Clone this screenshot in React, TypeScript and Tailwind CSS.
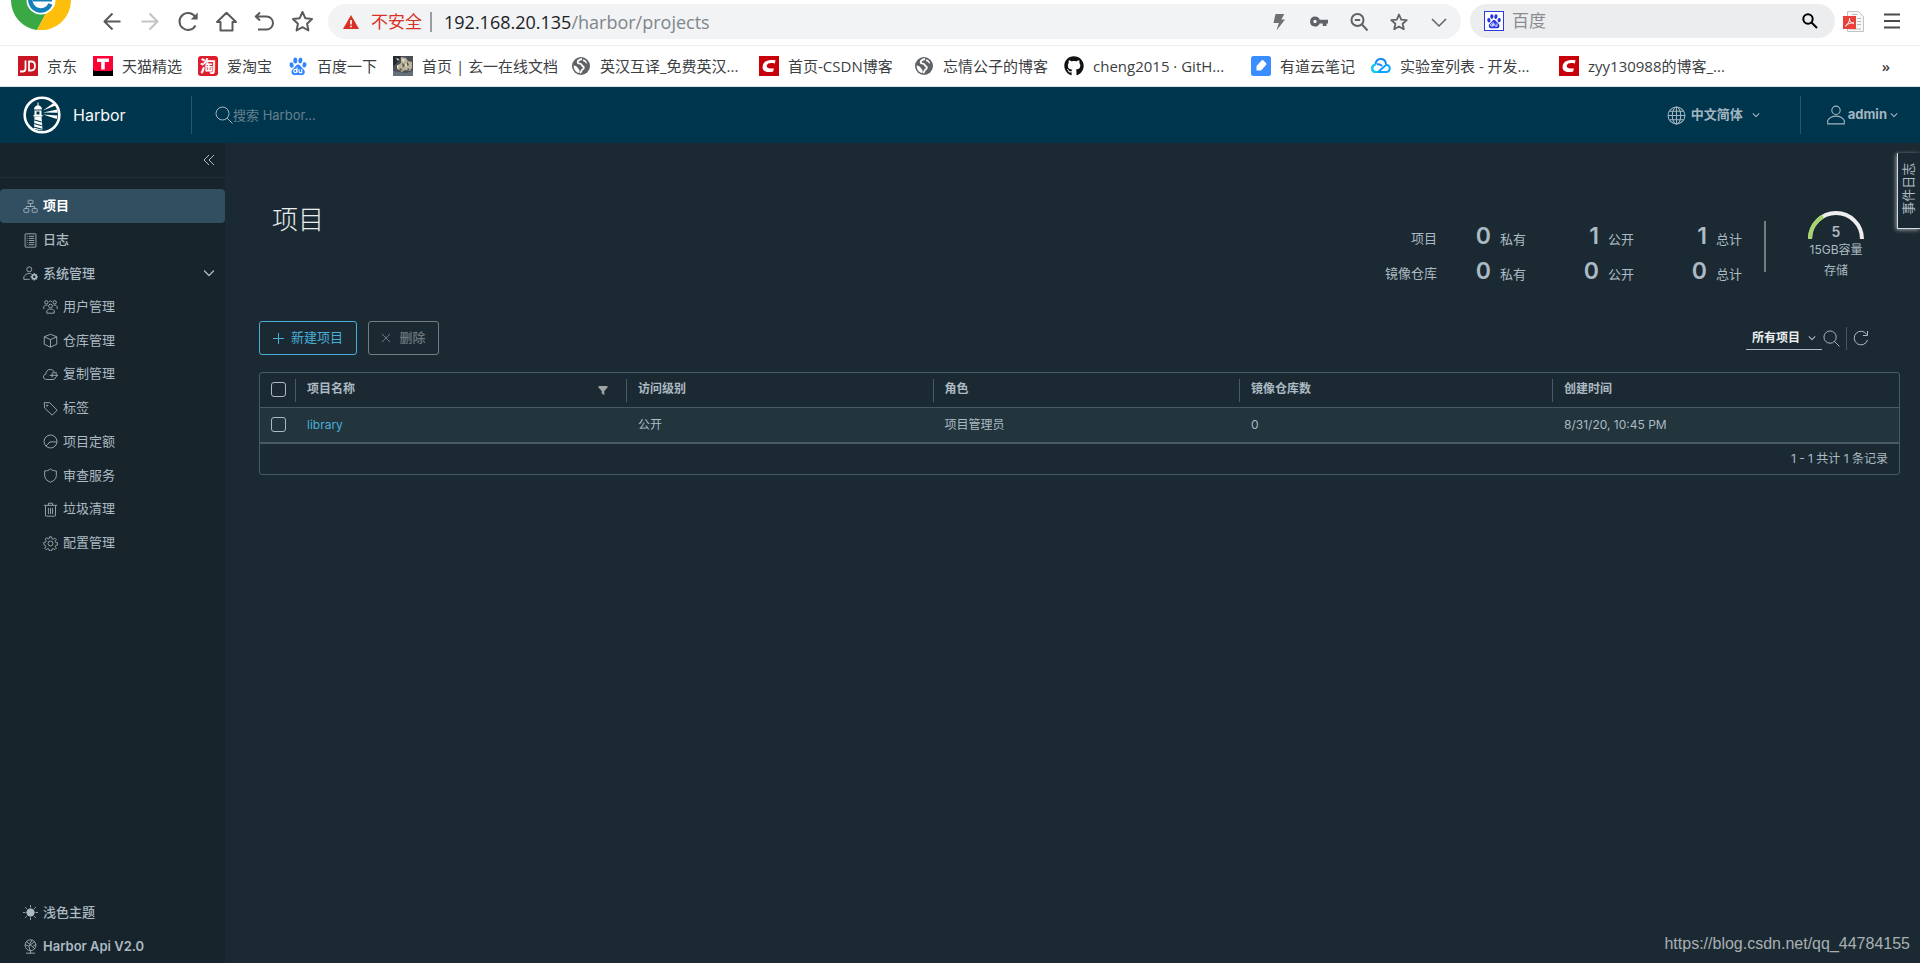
import React from 'react';
import { FaGithub } from 'react-icons/fa';

type SvgProps = { className?: string; children?: React.ReactNode; box?: string; width?: number };

function Line({ className = '', children, box = '0 0 36 36', width = 2 }: SvgProps) {
  return (
    <svg
      aria-hidden="true"
      className={`shrink-0 ${className}`}
      viewBox={box}
      fill="none"
      stroke="currentColor"
      strokeWidth={width}
      strokeLinejoin="round"
    >
      {children}
    </svg>
  );
}

/* ---------- browser chrome ---------- */

function BrowserLogo() {
  return (
    <svg aria-hidden="true" className="h-[30px] w-[60px] shrink-0 self-start" viewBox="0 0 60 30">
      <path d="M0 0 A30 30 0 0 0 26 30 L42 0 Z" fill="#3aa845" />
      <path d="M26 30 A30 30 0 0 0 60 0 L34 0 L44 4 L35 13 Z" fill="#fdbf0b" />
      <circle cx="30" cy="0" r="14.500" fill="#fff" />
      <path d="M19.500 -2a10.500 10.500 0 0 0 20 6" fill="none" stroke="#1380b8" strokeWidth="4.500" />
      <path d="M22 0h19" stroke="#1380b8" strokeWidth="3" />
    </svg>
  );
}

const navIcons: { label: string; tone: string; art: React.ReactNode }[] = [
  { label: '后退', tone: 'text-[#5a5a5a]', art: <path d="M18.500 10.500H2.500M10.500 2.500l-8 8 8 8" /> },
  { label: '前进', tone: 'text-[#c4c4c4]', art: <path d="M1.500 10.500h16M9.500 2.500l8 8-8 8" /> },
  {
    label: '刷新',
    tone: 'text-[#5a5a5a]',
    art: (
      <>
        <path d="M17.500 14.500a8.500 8.500 0 1 1 .3-7.500" />
        <path d="M19.700 1.500v7h-7z" fill="currentColor" stroke="none" />
      </>
    ),
  },
  { label: '主页', tone: 'text-[#5a5a5a]', art: <path d="M1 11L10.500 1.800 20 11h-3.500v8.500h-12V11z" /> },
  { label: '撤销', tone: 'text-[#5a5a5a]', art: <path d="M6 1.500L1.800 5.500 6 9.500M2 5.500h10.500a6.500 6.500 0 0 1 0 13H4" /> },
  {
    label: '收藏',
    tone: 'text-[#5a5a5a]',
    art: <path d="M10.500 1l2.900 6.300 6.600.8-4.900 4.600 1.300 6.800-5.900-3.300-5.900 3.300 1.300-6.800L1 8.100l6.600-.8z" />,
  },
];

function Paw({ className = '' }: { className?: string }) {
  return (
    <svg aria-hidden="true" className={`shrink-0 ${className}`} viewBox="0 0 20 20" fill="currentColor">
      <ellipse cx="3.600" cy="9" rx="2" ry="2.800" transform="rotate(-12 3.600 9)" />
      <ellipse cx="7.300" cy="4.500" rx="2" ry="2.900" />
      <ellipse cx="12.400" cy="4.500" rx="2" ry="2.900" transform="rotate(8 12.400 4.500)" />
      <ellipse cx="16.500" cy="8.800" rx="2" ry="2.700" transform="rotate(8 16.500 8.800)" />
      <path d="M10 8.600c2 0 2.700 1.900 4.100 3.300 1.700 1.500 3.200 2.600 2.600 4.900-.6 2.300-2.600 2.500-4 2.300-1.300-.2-3.700-.2-5 0-1.700.3-3.900-.1-4.200-2.500-.3-2 .9-3.100 2.500-4.500C7.400 10.900 8 8.600 10 8.600z" />
      <g fill="none" stroke="#fff" strokeWidth="1.100">
        <circle cx="7.300" cy="15" r="1.600" />
        <path d="M9 11.500v5.200M11 13.200v2.200q0 1.200 1.200 1.200h1.500v-3.600" />
      </g>
    </svg>
  );
}

function Earth() {
  return (
    <svg aria-hidden="true" className="size-5 shrink-0" viewBox="0 0 20 20">
      <circle cx="10" cy="10" r="9" fill="#5f6368" />
      <path
        d="M11 3c-2.500.5-4.500 2-4.300 3.600.3 1.300 2 .9 3.200 1.400 1.500.6.600 2 2.100 2.400 1.200.3 1 2 0 2.600-1.400.8-1.500 2.600-2.800 4.200"
        fill="none"
        stroke="#fff"
        strokeWidth="1.800"
      />
      <path d="M2.700 9.500c1.800.2 3.500.9 4 2.300.5 1.500 1.900 1.200 2 3.200l-.5 2C5 16.500 2.500 13.500 2.700 9.500z" fill="#fff" />
      <path d="M12.500 3.200c-1 1-.5 2.400 1 2.500 1 0 .8 1.700 2.600 2C16 5.800 14.500 4 12.500 3.200z" fill="#fff" />
    </svg>
  );
}

function CsdnIcon() {
  return (
    <svg aria-hidden="true" className="size-5 shrink-0" viewBox="0 0 20 20">
      <path d="M0 0h20v20H0z" fill="#c7000b" />
      <path d="M16.500 4.300l-.7 3.200c-4-.8-7.500-.6-8 2.300-.4 2.700 3 3.200 7 2.400l-.6 3.200c-6 1.400-11 .2-10.600-4.700C4 5 9.500 3.200 16.500 4.300z" fill="#fff" />
    </svg>
  );
}

const bookmarks: { text: string; size: string; icon: React.ReactNode }[] = [
  {
    text: '京东',
    size: 'w-[30px]',
    icon: (
      <svg aria-hidden="true" className="size-5 shrink-0" viewBox="0 0 20 20">
        <path d="M0 0h20v20H0z" fill="#c81623" />
        <path d="M7.500 4.500v8q0 3-3 3H2M11 5.500v9h2.300q3.700 0 3.700-4.500t-3.700-4.500z" fill="none" stroke="#fff" strokeWidth="1.800" />
      </svg>
    ),
  },
  {
    text: '天猫精选',
    size: 'w-[60px]',
    icon: (
      <svg aria-hidden="true" className="size-5 shrink-0" viewBox="0 0 20 20">
        <path d="M0 0h20v20H0z" fill="#ff0036" />
        <path d="M0 13.500q1 1.500 3 1.500h14q2 0 3-1.500V20H0z" fill="#000" />
        <path d="M4 2.500h12V6h-4.200v7.500H8.200V6H4z" fill="#fff" />
      </svg>
    ),
  },
  {
    text: '爱淘宝',
    size: 'w-[45px]',
    icon: (
      <span aria-hidden="true" className="flex size-5 shrink-0 items-center justify-center rounded-[3px] bg-[#dd1c2c] text-[16px] leading-5 font-bold text-white">
        淘
      </span>
    ),
  },
  { text: '百度一下', size: 'w-[60px]', icon: <Paw className="size-5 text-[#3385ff]" /> },
  {
    text: '首页 | 玄一在线文档',
    size: 'w-[133px]',
    icon: (
      <svg aria-hidden="true" className="size-5 shrink-0" viewBox="0 0 20 20">
        <path d="M0 0h20v20H0z" fill="#4a4f55" />
        <path d="M0 0h8l-3 6-5 4z" fill="#26292e" />
        <path d="M8 1l5 1 2 3 4 1v6l-2 3-5-1-3 2-5-3 1-4 3-2z" fill="#b9b29c" />
        <path d="M3 2l3 1-1 2zM9 3l3 1-2 2zM4 9l2 1-2 3zM12 8l3 1-2 2z" fill="#efe8d4" />
        <path d="M9 7l3 2-2 3zM14 5l2 4-2 1zM7 12l3 2-4 1zM15 12l2 2-3 1z" fill="#5f5a4c" />
        <path d="M0 15l6 1 7 1 7-2v5H0z" fill="#63707c" />
      </svg>
    ),
  },
  { text: '英汉互译_免费英汉...', size: 'w-[143px]', icon: <Earth /> },
  { text: '首页-CSDN博客', size: 'w-[110px]', icon: <CsdnIcon /> },
  { text: '忘情公子的博客', size: 'w-[105px]', icon: <Earth /> },
  { text: 'cheng2015 · GitH...', size: 'w-[142px]', icon: <FaGithub aria-hidden="true" className="size-5 shrink-0 text-[#111]" /> },
  {
    text: '有道云笔记',
    size: 'w-[75px]',
    icon: (
      <svg aria-hidden="true" className="size-5 shrink-0" viewBox="0 0 20 20">
        <rect width="20" height="20" rx="2.500" fill="#398dff" />
        <path d="M5.500 14.500V10l5-5.500q1-1 2 0l2.500 2.500q1 1 0 2l-5 5.500z" fill="#fff" />
      </svg>
    ),
  },
  {
    text: '实验室列表 - 开发...',
    size: 'w-[143px]',
    icon: (
      <svg aria-hidden="true" className="size-5 shrink-0" viewBox="0 0 20 20" fill="none" strokeWidth="2">
        <path d="M4.500 8.500C5 1.500 14 1 15 8" stroke="#1687f5" />
        <path d="M4.500 8.500c-4.500 1-4.500 7.500.5 7.500h2l8-7c5-.5 5 7 0 7H7" stroke="#08a4ff" />
        <path d="M4.500 8.500c-4.500 1-4.500 7.500.5 7.500h1.500" stroke="#12cdf0" />
        <path d="M6 8.500c2-.5 3.500 0 5 1.500" stroke="#1687f5" />
      </svg>
    ),
  },
  { text: 'zyy130988的博客_...', size: 'w-[143px]', icon: <CsdnIcon /> },
];

function Browser() {
  return (
    <div className="bg-white font-['Open_Sans','Noto_Sans_CJK_SC',sans-serif]">
      <div className="flex h-[46px] items-start border-b border-[#ededed] pr-5 pl-[11px]">
        <BrowserLogo />
        <div className="ml-[31px] flex h-[42px] items-center gap-[17px]">
          {navIcons.map((n) => (
            <button key={n.label} type="button" aria-label={n.label} className={n.tone}>
              <Line box="0 0 21 21" className="size-[21px]">
                {n.art}
              </Line>
            </button>
          ))}
        </div>
        <div className="mt-1 ml-[15px] flex h-[35px] min-w-0 flex-1 items-center rounded-full bg-[#f1f3f4] pr-3 pl-[15px] text-[17px] leading-6 whitespace-nowrap">
          <svg aria-hidden="true" className="size-4 shrink-0" viewBox="0 0 16 16">
            <path d="M8 1l8 14H0z" fill="#d93025" />
            <path d="M7.200 6h1.600v4.500H7.200zM7.200 11.700h1.600v1.600H7.200z" fill="#fff" />
          </svg>
          <span className="ml-3 text-[#d93025]">不安全</span>
          <span className="mx-2 h-5 w-[2px] bg-[#9a9da1]" />
          <span className="ml-1 text-[18px] text-[#202124]">
            192.168.20.135<span className="text-[#80868b]">/harbor/projects</span>
          </span>
          <div className="ml-auto flex items-center gap-5 text-[#5f6368]">
            <button type="button" aria-label="极速模式">
              <svg aria-hidden="true" className="size-5" viewBox="0 0 20 20" fill="#707070">
                <path d="M6.500 2h8.800l-3 5.500h3.700L7.500 18.500 9.800 11H4.500z" />
              </svg>
            </button>
            <button type="button" aria-label="密码">
              <svg aria-hidden="true" className="size-5" viewBox="0 0 20 20" fill="currentColor">
                <path
                  fillRule="evenodd"
                  d="M6 4.500a5 5 0 0 1 4.700 3.300H19v3.700h-1.500V14h-3.700v-2.500h-3.100A5 5 0 1 1 6 4.500zm0 3.300a1.700 1.700 0 1 0 0 3.400 1.700 1.700 0 0 0 0-3.400z"
                />
              </svg>
            </button>
            <button type="button" aria-label="缩小">
              <Line box="0 0 20 20" className="size-5">
                <circle cx="8.500" cy="8" r="6" />
                <path d="M13 12.500l5.500 6M5.800 8h5.400" />
              </Line>
            </button>
            <button type="button" aria-label="加入收藏">
              <Line box="0 0 20 20" className="size-5" width={1.800}>
                <path d="M10 2.500l2.200 5.100 5.600.5-4.200 3.700 1.200 5.500-4.800-2.900-4.800 2.900 1.200-5.500-4.200-3.700 5.600-.5z" />
              </Line>
            </button>
            <button type="button" aria-label="更多">
              <Line box="0 0 20 20" className="size-5" width={1.500}>
                <path d="M3 7l7 7 7-7" />
              </Line>
            </button>
          </div>
        </div>
        <div className="mt-1 ml-[9px] flex h-[34px] w-[365px] items-center rounded-full bg-[#ecedef] pr-[17px] pl-[14px]">
          <span className="flex size-5 items-center justify-center border border-[#2a3be0] bg-white">
            <Paw className="size-4 text-[#2334e0]" />
          </span>
          <input
            aria-label="百度搜索"
            placeholder="百度"
            className="ml-2 h-6 min-w-0 flex-1 bg-transparent text-[17px] leading-6 outline-none placeholder:text-[#8a8c90]"
          />
          <button type="button" aria-label="搜索" className="text-black">
            <Line box="0 0 16 16" className="size-4">
              <circle cx="6" cy="6" r="4.700" />
              <path d="M9.500 9.500l5.500 5.500" />
            </Line>
          </button>
        </div>
        <button type="button" aria-label="PDF" className="mt-[11px] ml-2 h-[21px] w-[21px]">
          <svg aria-hidden="true" viewBox="0 0 21 21">
            <path d="M4.500.500h11l5 5v15h-16z" fill="#f7f7f7" stroke="#c4c4c4" />
            <path d="M9 3.500h5M14 7.500h4M14 10.500h4M14 13.500h4M6 18h12" stroke="#bbb" />
            <path d="M0 5h13v13H0z" fill="#e9403c" />
            <path d="M2.500 15c2-1 4.500-5 4-7.500 0 3 2 5 4.500 4.500-3-.5-6 .5-8.500 3z" fill="none" stroke="#fff" />
          </svg>
        </button>
        <button type="button" aria-label="菜单" className="mt-[13px] ml-5 text-[#4a4a4a]">
          <Line box="0 0 16 16" className="size-4">
            <path d="M0 1.500h16M0 8h16M0 14.500h16" />
          </Line>
        </button>
      </div>
      <nav aria-label="书签" className="flex h-[41px] items-center gap-4 border-b border-[#dcdcdc] pr-[26px] pl-[18px] text-[15px] leading-5 text-[#3c4043]">
        {bookmarks.map((b) => (
          <a key={b.text} href="#bookmark" className="flex items-center gap-[9px] whitespace-nowrap">
            {b.icon}
            <span className={b.size}>{b.text}</span>
          </a>
        ))}
        <button type="button" aria-label="更多书签" className="ml-auto w-4 font-semibold">
          »
        </button>
      </nav>
    </div>
  );
}

/* ---------- Harbor header ---------- */

function HarborLogo() {
  return (
    <svg aria-hidden="true" className="size-[38px] shrink-0" viewBox="0 0 38 38">
      <circle cx="19" cy="19" r="17.300" fill="none" stroke="#fff" strokeWidth="2.600" />
      <path d="M11 13.500q0-3.500 4-4.500 4 1 4 4.500zM11.500 14.500h7v5h-7z" fill="#fff" />
      <path d="M13.500 15.500h3v3h-3z" fill="#00364d" />
      <path d="M14.500 6.500h1V9h-1zM10.500 19h9v1.500h-9z" fill="#fff" />
      <path d="M11.500 20.500h7l1 14-8.500-1.500z" fill="#fff" />
      <path d="M11.500 24l7 2M11.200 27.500l7.500 2.200M11 31l8 2.200" stroke="#00364d" strokeWidth="1.100" />
      <path d="M20 14.500L30.500 7l2 2.500zM20 16.500l14-3 .6 3.200zM20 18.500l14.500 1-.7 3.500z" fill="#fff" />
    </svg>
  );
}

function Caret({ className = '' }: { className?: string }) {
  return (
    <Line box="0 0 10 10" className={`size-2 ${className}`} width={1.300}>
      <path d="M1 3l4 4 4-4" />
    </Line>
  );
}

function SearchIcon({ className }: { className: string }) {
  return (
    <Line className={className}>
      <circle cx="15" cy="15" r="13" />
      <path d="M24 24l11 11" />
    </Line>
  );
}

function Header() {
  return (
    <header className="flex h-14 items-center bg-[#00364d] text-[#a3b5c0]">
      <a href="#home" className="flex h-[38px] w-48 items-center gap-3 border-r border-[#2a566a] pl-[23px] text-[16px] text-[#fafafa]">
        <HarborLogo />
        Harbor
      </a>
      <label className="flex flex-1 items-center pl-[23px]">
        <SearchIcon className="size-[18px]" />
        <input
          aria-label="搜索"
          placeholder="搜索 Harbor..."
          className="h-6 w-64 bg-transparent text-[13px] outline-none placeholder:text-[#64818f]"
        />
      </label>
      <button type="button" className="flex items-center text-[13px] font-bold">
        <Line className="mr-[5px] size-[19px]">
          <circle cx="18" cy="18" r="16" />
          <ellipse cx="18" cy="18" rx="8" ry="16" />
          <path d="M18 2v32M2 18h32M5 10h26M5 26h26" />
        </Line>
        中文简体
        <Caret className="ml-[9px]" />
      </button>
      <button type="button" className="ml-10 flex h-[38px] items-center border-l border-[#2a566a] pr-[22px] pl-[25px] text-[13px] font-bold">
        <Line className="mr-[2px] size-5">
          <circle cx="18" cy="9.500" r="7.500" />
          <path d="M3 34v-6c3-5 8.500-8 15-8s12 3 15 8v6z" />
        </Line>
        admin
        <Caret className="ml-[3px]" />
      </button>
    </header>
  );
}

/* ---------- sidebar ---------- */

const art = {
  projects: (
    <>
      <rect x="12" y="3" width="12" height="8" rx="2" />
      <rect x="2" y="23" width="12" height="9" rx="2" />
      <rect x="22" y="23" width="12" height="9" rx="2" />
      <path d="M18 11v7M8 23v-5h20v5" />
    </>
  ),
  logs: (
    <>
      <rect x="5" y="2" width="26" height="32" rx="1" />
      <path d="M9 8h2M9 13h2M9 18h2M9 23h2M9 28h2M14 8h13M14 13h13M14 18h13M14 23h13M14 28h13" />
    </>
  ),
  admin: (
    <>
      <circle cx="15" cy="8" r="6" />
      <path d="M16 32H2v-6c3-5 7-8 13-8 2 0 4 0 5 1" />
      <circle cx="27" cy="26" r="5" strokeWidth="4" />
      <path d="M27 17v4M27 31v4M18 26h4M32 26h4M21 20l3 3M30 29l3 3M33 20l-3 3M24 29l-3 3" strokeWidth="3" />
    </>
  ),
  users: (
    <>
      <circle cx="18" cy="17" r="4.500" />
      <circle cx="8" cy="8" r="4" />
      <circle cx="28" cy="8" r="4" />
      <path d="M9 34v-6c4-5 14-5 18 0v6zM2 24v-6c2-3 6-4 9-3M34 24v-6c-2-3-6-4-9-3M15 7c1-3 5-3 6 0" />
    </>
  ),
  registry: <path d="M18 3l15 6v18l-15 7-15-7V9zM3 9l15 7 15-7M18 16v18" />,
  replication: (
    <>
      <path d="M30 24c0 4-3 6-6 6H8c-4 0-7-3-7-6s2-6 6-7c0-6 4-11 10-11 5 0 8 2 10 6" />
      <path d="M16 20h19M31 16l4 4-4 4M22 14h12M22 15v10" />
    </>
  ),
  tag: (
    <>
      <path d="M3 4h13l18 18-12 12L4 17z" />
      <circle cx="10" cy="11" r="1.500" />
    </>
  ),
  quota: (
    <>
      <circle cx="18" cy="18" r="15.500" />
      <path d="M7 29l10-10h16M17 19l-3 2" />
    </>
  ),
  shield: <path d="M18 2c4 4 9 5 14 5v11c0 8-6 13-14 16C10 31 4 26 4 18V7c5 0 10-1 14-5z" />,
  trash: <path d="M6 9v24q0 1 2 1h20q2 0 2-1V9M2 8h32M13 8V3h10v5M13 14v15M18 14v15M23 14v15" />,
  gear: (
    <>
      <circle cx="18" cy="18" r="6" />
      <path d="M15.500 2h5l1 4.500 3 1.200 4-2.500 3.300 3.300-2.500 4 1.200 3 4.500 1v5l-4.500 1-1.200 3 2.500 4-3.300 3.300-4-2.500-3 1.200-1 4.500h-5l-1-4.500-3-1.200-4 2.500-3.300-3.300 2.500-4-1.200-3L2 20.500v-5l4.500-1 1.200-3-2.500-4 3.300-3.300 4 2.500 3-1.200z" />
    </>
  ),
  sun: (
    <>
      <circle cx="18" cy="18" r="9" fill="currentColor" />
      <path d="M18 0v6M18 30v6M0 18h6M30 18h6M5 5l4 4M27 27l4 4M31 5l-4 4M9 27l-4 4" />
    </>
  ),
  api: (
    <>
      <circle cx="18" cy="15" r="13" />
      <path d="M8 6l20 17M28 6L14 17l3 11M5 14l9 3M16 12l6-10M7 34h22M18 28v6M23 18l8-5" />
    </>
  ),
};

const topItems = [
  { text: '项目', icon: art.projects, active: true },
  { text: '日志', icon: art.logs, active: false },
];

const subItems = [
  { text: '用户管理', icon: art.users },
  { text: '仓库管理', icon: art.registry },
  { text: '复制管理', icon: art.replication },
  { text: '标签', icon: art.tag },
  { text: '项目定额', icon: art.quota },
  { text: '审查服务', icon: art.shield },
  { text: '垃圾清理', icon: art.trash },
  { text: '配置管理', icon: art.gear },
];

function Sidebar() {
  return (
    <aside className="flex w-[225px] shrink-0 flex-col bg-[#17242b] text-[13px] leading-5 text-[#acbac3]">
      <div className="flex h-[35px] items-center justify-end border-b border-[#1f2e36] pr-[10px]">
        <button type="button" aria-label="收起">
          <Line box="0 0 12 12" className="size-3" width={1}>
            <path d="M6 1L1 6l5 5M11 1L6 6l5 5" />
          </Line>
        </button>
      </div>
      <nav className="mt-[11px] flex flex-col">
        {topItems.map((t) => (
          <a
            key={t.text}
            href="#nav"
            className={`flex h-[34px] items-center gap-[5px] pb-[2px] pl-[23px] ${t.active ? 'rounded-[4px] bg-[#324f62] font-bold text-white' : 'font-medium'}`}
          >
            <Line className="mt-[2px] size-[15px] text-[#acbac3]">{t.icon}</Line>
            {t.text}
          </a>
        ))}
        <button type="button" aria-expanded="true" className="flex h-[33px] items-center gap-[5px] pr-[11px] pb-[2px] pl-[23px] text-left font-medium">
          <Line className="mt-[2px] size-[15px]">{art.admin}</Line>
          <span className="flex-1">系统管理</span>
          <Line box="0 0 10 10" className="size-[10px]" width={1.300}>
            <path d="M0 2.500l5 5 5-5" />
          </Line>
        </button>
        <div className="flex h-[270px] flex-col">
          {subItems.map((s) => (
            <a key={s.text} href="#nav" className="flex flex-1 items-center gap-[5px] pb-[2px] pl-[43px]">
              <Line className="mt-[2px] size-[15px]">{s.icon}</Line>
              {s.text}
            </a>
          ))}
        </div>
      </nav>
      <div className="mt-auto flex flex-col">
        <button type="button" className="flex h-[34px] items-center gap-[5px] pl-[23px] font-medium">
          <Line className="size-[15px]">{art.sun}</Line>
          浅色主题
        </button>
        <a href="#api" className="flex h-[34px] items-center gap-[5px] pl-[23px] font-semibold">
          <Line className="size-[15px]">{art.api}</Line>
          Harbor Api V2.0
        </a>
      </div>
    </aside>
  );
}

/* ---------- main ---------- */

const stats = [
  { name: '项目', values: [0, 1, 1] },
  { name: '镜像仓库', values: [0, 0, 0] },
];
const statLabels = ['私有', '公开', '总计'];

function Summary() {
  return (
    <section className="flex h-[122px] items-start justify-between pr-6 pl-[13px]">
      <h1 className="text-[26px] leading-[42px] font-light text-[#eaedf0]">项目</h1>
      <div className="flex pt-[12px]">
        <div className="grid auto-rows-[35px] grid-cols-[auto_89px_108px_108px] pt-[9px] text-[13px]">
          {stats.map((s) => (
            <React.Fragment key={s.name}>
              <span className="text-right leading-9">{s.name}</span>
              {s.values.map((v, i) => (
                <span key={statLabels[i]} className="flex items-baseline justify-end gap-[9px]">
                  <b className="text-[23px] leading-8 font-semibold">{v}</b>
                  {statLabels[i]}
                </span>
              ))}
            </React.Fragment>
          ))}
        </div>
        <div className="mt-[10px] ml-[22px] h-[51px] w-[2px] bg-[#737b81]" />
        <div className="ml-[30px] flex w-20 flex-col items-center">
          <div className="grid">
            <svg aria-hidden="true" className="col-start-1 row-start-1 h-7 w-14" viewBox="0 0 56 28" fill="none" strokeWidth="4">
              <path d="M2 28a26 26 0 0 1 52 0" stroke="#eee" />
              <path d="M2 28a26 26 0 0 1 13-22.500" stroke="#a6d46b" />
            </svg>
            <b className="col-start-1 row-start-1 self-end text-center text-[14px] leading-[14px] font-semibold">5</b>
          </div>
          <span className="text-[12px] leading-[22px]">15GB容量</span>
          <span className="text-[12px] leading-5">存储</span>
        </div>
      </div>
    </section>
  );
}

function Toolbar() {
  return (
    <div className="flex h-[34px] items-center pr-[31px]">
      <button type="button" className="flex h-[34px] w-[98px] items-center justify-center gap-[7px] rounded-[3px] border border-[#49afd9] text-[13px] text-[#49afd9]">
        <Line box="0 0 11 11" className="size-[11px]" width={1}>
          <path d="M5.500 0v11M0 5.500h11" />
        </Line>
        新建项目
      </button>
      <button type="button" disabled className="ml-[11px] flex h-[34px] w-[71px] items-center justify-center gap-2 rounded-[3px] border border-[#747d82] text-[13px] font-medium text-[#6f797f]">
        <Line box="0 0 10 10" className="size-[10px]" width={1}>
          <path d="M1 1l8 8M9 1L1 9" />
        </Line>
        删除
      </button>
      <div className="ml-auto grid w-[76px] items-center border-b border-[#acbac3]">
        <select
          aria-label="项目筛选"
          className="col-start-1 row-start-1 h-[22px] w-full appearance-none bg-transparent pl-[6px] text-[12px] leading-5 font-bold text-[#eaedf0] outline-none"
        >
          <option>所有项目</option>
        </select>
        <Caret className="pointer-events-none col-start-1 row-start-1 mr-[6px] justify-self-end" />
      </div>
      <button type="button" aria-label="搜索" className="ml-[1px]">
        <SearchIcon className="size-[17px]" />
      </button>
      <span className="mx-[6px] h-[23px] w-px bg-[#49555f]" />
      <button type="button" aria-label="刷新">
        <Line box="0 0 16 16" className="size-4" width={1}>
          <path d="M14.500 10A6.800 6.800 0 1 1 13.800 4.500M14.500 1v4.500H10" />
        </Line>
      </button>
    </div>
  );
}

const columns = [
  { text: '项目名称', size: 'w-[20.2%]' },
  { text: '访问级别', size: 'w-[18.7%]' },
  { text: '角色', size: 'w-[18.7%]' },
  { text: '镜像仓库数', size: 'w-[19.1%]' },
  { text: '创建时间', size: '' },
];

const box = 'block size-[15px] appearance-none rounded-[3px] border border-[#acbac3]';

function ProjectTable() {
  return (
    <div className="mt-[17px] overflow-hidden rounded-[3px] border border-[#495a67] text-[12px] leading-5">
      <table className="w-full table-fixed border-separate border-spacing-0 text-left">
        <thead>
          <tr>
            <th className="h-[35px] w-[35px] border-b border-[#495a67] p-0 pb-px pl-[11px]">
              <input type="checkbox" aria-label="全选" className={box} />
            </th>
            {columns.map((c, i) => (
              <th key={c.text} className={`border-b border-[#495a67] p-0 ${c.size}`}>
                <div className="flex h-[23px] items-center border-l border-[#495a67] pb-[2px] pl-[11px] font-bold">
                  {c.text}
                  {i === 0 && (
                    <button type="button" aria-label="筛选" className="mt-[2px] mr-[18px] ml-auto">
                      <svg aria-hidden="true" className="size-[10px]" viewBox="0 0 10 10" fill="#a0a3a5">
                        <path d="M.500 1h9v1.500L6.300 6v4L3.700 8.500V6L.500 2.500z" />
                      </svg>
                    </button>
                  )}
                </div>
              </th>
            ))}
          </tr>
        </thead>
        <tbody>
          <tr className="bg-[#22343c]">
            <td className="h-9 border-b-2 border-[#495a67] p-0 pb-px pl-[11px]">
              <input type="checkbox" aria-label="选择 library" className={box} />
            </td>
            <td className="border-b-2 border-[#495a67] p-0 pl-3">
              <a href="#library" className="text-[#49afd9]">
                library
              </a>
            </td>
            <td className="border-b-2 border-[#495a67] p-0 pl-3">公开</td>
            <td className="border-b-2 border-[#495a67] p-0 pl-3">项目管理员</td>
            <td className="border-b-2 border-[#495a67] p-0 pl-3">0</td>
            <td className="border-b-2 border-[#495a67] p-0 pl-3">8/31/20, 10:45 PM</td>
          </tr>
        </tbody>
      </table>
      <div className="flex h-[30px] items-center justify-end pr-[11px]">1 - 1 共计 1 条记录</div>
    </div>
  );
}

export default function App() {
  return (
    <div className="flex min-h-screen flex-col font-['Inter','Noto_Sans_CJK_SC',sans-serif]">
      <Browser />
      <Header />
      <div className="relative flex flex-1 bg-[#1b2a32] text-[#acbac3]">
        <Sidebar />
        <main className="min-w-0 flex-1 pt-14 pr-5 pl-[34px]">
          <Summary />
          <Toolbar />
          <ProjectTable />
        </main>
        <button
          type="button"
          className="absolute top-[10px] right-0 flex h-[76px] w-[23px] items-center justify-center border-b border-l border-[#d5dade] bg-[#1b2a32] pb-1 text-[13px] shadow-[-1px_1px_4px_#ffffff90]"
        >
          <span className="-rotate-90 whitespace-nowrap">事件日志</span>
        </button>
        <span className="absolute right-[10px] bottom-[9px] font-['Liberation_Sans',sans-serif] text-[16px] leading-5 text-[#a9afb2]">
          https://blog.csdn.net/qq_44784155
        </span>
      </div>
    </div>
  );
}
